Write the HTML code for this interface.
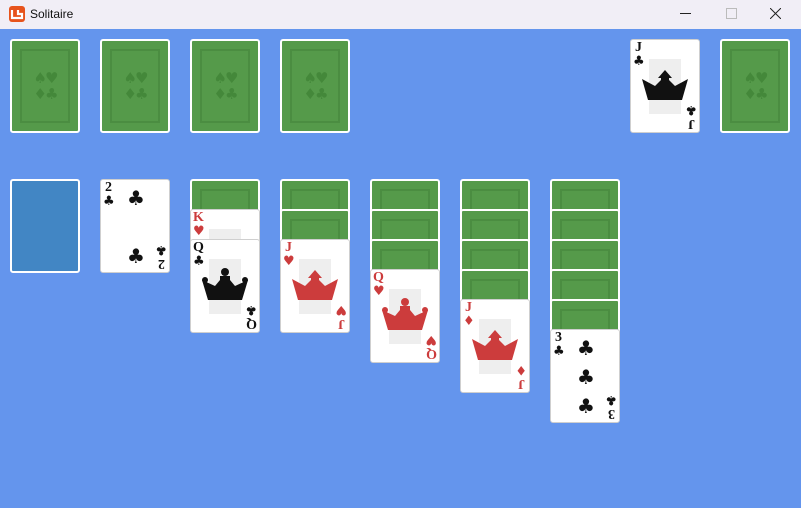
<!DOCTYPE html><html><head><style>
body{margin:0;width:801px;height:508px;background:#6495ed;position:relative;overflow:hidden;font-family:"Liberation Sans",sans-serif}
.tb{position:absolute;left:0;top:0;width:801px;height:29px;background:#f1eef6}
.tb .t{position:absolute;left:30px;top:7px;font-size:12px;color:#111}
.c{position:absolute;width:70px;height:94px;box-sizing:border-box;border-radius:3px}
.b{background:#559a4a;border:2px solid #fff}
.b:before{content:"";position:absolute;left:8px;top:8px;width:50px;height:74px;border:2px solid #4b8d41;box-sizing:border-box}
.b i{position:absolute;left:13px;top:29px;font-style:normal;font-family:"DejaVu Sans";font-size:15px;line-height:16px;color:#44883a;width:40px;text-align:center;letter-spacing:-2px}
.f{background:#fff;border:1px solid #cfcfcf}
.f .r{position:absolute;left:2px;top:1px;font:bold 14px "Liberation Serif",serif;line-height:14px;text-align:center;width:11px}
.f .r span{display:block;font-family:"DejaVu Sans";font-size:13px;line-height:13px}
.f .r2{left:auto;top:auto;right:2px;bottom:2px;transform:rotate(180deg)}
.g{position:absolute;left:18px;top:19px;width:32px;height:55px;background:#eee}
.red{color:#cc3c3c}.blk{color:#111}
.p{position:absolute;font-family:"DejaVu Sans";font-size:20px;line-height:20px}
.cr{position:absolute;left:11px;top:26px}
</style></head><body>
<div class="tb"><svg style="position:absolute;left:9px;top:6px" width="16" height="16"><rect width="16" height="16" rx="3" fill="#e7531c"/><path d="M3 4v8h10V8H9V4" fill="none" stroke="#fff" stroke-width="2.2"/></svg><span class="t">Solitaire</span>
<span style="position:absolute;left:680px;top:13px;width:11px;height:1px;background:#222"></span>
<span style="position:absolute;left:726px;top:8px;width:9px;height:9px;border:1px solid #bbb"></span>
<svg style="position:absolute;left:770px;top:8px" width="11" height="11"><path d="M0 0L11 11M11 0L0 11" stroke="#222"/></svg></div>

<div class="c b" style="left:10px;top:39px"><i>♠♥<br>♦♣</i></div>
<div class="c b" style="left:100px;top:39px"><i>♠♥<br>♦♣</i></div>
<div class="c b" style="left:190px;top:39px"><i>♠♥<br>♦♣</i></div>
<div class="c b" style="left:280px;top:39px"><i>♠♥<br>♦♣</i></div>
<div class="c b" style="left:720px;top:39px"><i>♠♥<br>♦♣</i></div>
<div class="c f blk" style="left:630px;top:39px"><div class="g"></div><div class="r">J<span>♣</span></div><div class="r r2">J<span>♣</span></div>
<svg class="cr" width="46" height="34" viewBox="0 0 46 34"><path d="M0 13L13 20L19 14V12H16L23 4L30 12H27V14L33 20L46 13L40 34H6Z" fill="#111"/></svg></div>

<div class="c" style="left:10px;top:179px;background:#4286c4;border:2px solid #fff"></div>
<div class="c f blk" style="left:100px;top:179px"><div class="r">2<span>♣</span></div><div class="r r2">2<span>♣</span></div><span class="p" style="left:26px;top:8px">♣</span><span class="p" style="left:26px;top:66px">♣</span></div>

<div class="c b" style="left:190px;top:179px"></div>
<div class="c f red" style="left:190px;top:209px"><div class="g"></div><div class="r">K<span>♥</span></div></div>
<div class="c f blk" style="left:190px;top:239px"><div class="g"></div><div class="r">Q<span>♣</span></div><div class="r r2">Q<span>♣</span></div>
<svg class="cr" width="46" height="34" viewBox="0 0 46 34"><circle cx="23" cy="6" r="4" fill="#111"/><circle cx="3" cy="14" r="3" fill="#111"/><circle cx="43" cy="14" r="3" fill="#111"/><path d="M0 14L13 20L18 14V10H28V14L33 20L46 14L40 34H6Z" fill="#111"/></svg></div>

<div class="c b" style="left:280px;top:179px"></div>
<div class="c b" style="left:280px;top:209px"></div>
<div class="c f red" style="left:280px;top:239px"><div class="g"></div><div class="r">J<span>♥</span></div><div class="r r2">J<span>♥</span></div>
<svg class="cr" width="46" height="34" viewBox="0 0 46 34"><path d="M0 13L13 20L19 14V12H16L23 4L30 12H27V14L33 20L46 13L40 34H6Z" fill="#cc3c3c"/></svg></div>

<div class="c b" style="left:370px;top:179px"></div>
<div class="c b" style="left:370px;top:209px"></div>
<div class="c b" style="left:370px;top:239px"></div>
<div class="c f red" style="left:370px;top:269px"><div class="g"></div><div class="r">Q<span>♥</span></div><div class="r r2">Q<span>♥</span></div>
<svg class="cr" width="46" height="34" viewBox="0 0 46 34"><circle cx="23" cy="6" r="4" fill="#cc3c3c"/><circle cx="3" cy="14" r="3" fill="#cc3c3c"/><circle cx="43" cy="14" r="3" fill="#cc3c3c"/><path d="M0 14L13 20L18 14V10H28V14L33 20L46 14L40 34H6Z" fill="#cc3c3c"/></svg></div>

<div class="c b" style="left:460px;top:179px"></div>
<div class="c b" style="left:460px;top:209px"></div>
<div class="c b" style="left:460px;top:239px"></div>
<div class="c b" style="left:460px;top:269px"></div>
<div class="c f red" style="left:460px;top:299px"><div class="g"></div><div class="r">J<span>♦</span></div><div class="r r2">J<span>♦</span></div>
<svg class="cr" width="46" height="34" viewBox="0 0 46 34"><path d="M0 13L13 20L19 14V12H16L23 4L30 12H27V14L33 20L46 13L40 34H6Z" fill="#cc3c3c"/></svg></div>

<div class="c b" style="left:550px;top:179px"></div>
<div class="c b" style="left:550px;top:209px"></div>
<div class="c b" style="left:550px;top:239px"></div>
<div class="c b" style="left:550px;top:269px"></div>
<div class="c b" style="left:550px;top:299px"></div>
<div class="c f blk" style="left:550px;top:329px"><div class="r">3<span>♣</span></div><div class="r r2">3<span>♣</span></div><span class="p" style="left:26px;top:8px">♣</span><span class="p" style="left:26px;top:37px">♣</span><span class="p" style="left:26px;top:66px">♣</span></div>
</body></html>
